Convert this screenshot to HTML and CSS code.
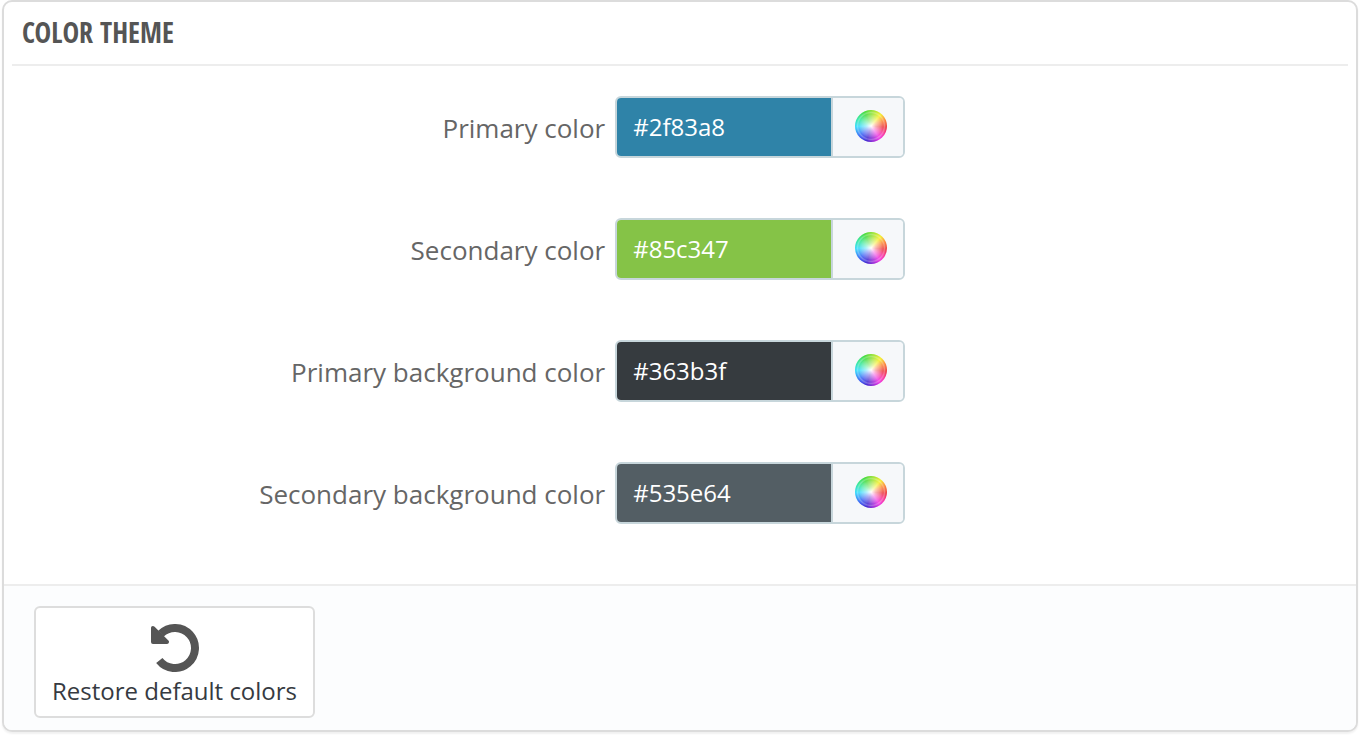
FILE: index.html
```html
<!DOCTYPE html>
<html lang="en">
<head>
<meta charset="utf-8">
<meta name="viewport" content="width=device-width, initial-scale=1">
<title>Color theme</title>
<link rel="stylesheet" href="styles.css">
</head>
<body>
<form class="panel">
  <h1 class="panel-heading">COLOR THEME</h1>
  <div class="fields">
    <div class="field">
      <label class="field-label" for="primary">Primary color</label>
      <div class="picker">
        <input class="picker-value primary" id="primary" type="text" value="#2f83a8">
        <button class="picker-button" type="button" aria-label="Pick primary color"><span class="wheel"></span></button>
      </div>
    </div>
    <div class="field">
      <label class="field-label" for="secondary">Secondary color</label>
      <div class="picker">
        <input class="picker-value secondary" id="secondary" type="text" value="#85c347">
        <button class="picker-button" type="button" aria-label="Pick secondary color"><span class="wheel"></span></button>
      </div>
    </div>
    <div class="field">
      <label class="field-label" for="primary-bg">Primary background color</label>
      <div class="picker">
        <input class="picker-value primary-bg" id="primary-bg" type="text" value="#363b3f">
        <button class="picker-button" type="button" aria-label="Pick primary background color"><span class="wheel"></span></button>
      </div>
    </div>
    <div class="field">
      <label class="field-label" for="secondary-bg">Secondary background color</label>
      <div class="picker">
        <input class="picker-value secondary-bg" id="secondary-bg" type="text" value="#535e64">
        <button class="picker-button" type="button" aria-label="Pick secondary background color"><span class="wheel"></span></button>
      </div>
    </div>
  </div>
  <div class="panel-footer">
    <button class="restore" type="button">
      <svg class="restore-icon" viewBox="0 0 48 48" aria-hidden="true">
        <path d="M8.3 36.4A20 20 0 1 0 10 9.7" fill="none" stroke="#555" stroke-width="8"/>
        <path d="M0 3.8Q0 2 1.8 2Q2.8 2 3.6 2.8L17.4 16.6Q18.2 17.4 18 18.2Q17.700 20 16 20H2Q0 20 0 18Z" fill="#555"/>
      </svg>
      <span>Restore default colors</span>
    </button>
  </div>
</form>
</body>
</html>
```
FILE: styles.css
```css
* {
  box-sizing: border-box;
}

body {
  margin: 0;
  background: #fff;
  font-family: "Open Sans", "Noto Sans", sans-serif;
  color: #555;
}

.panel {
  margin: 0 2px 4px;
  border: 2px solid #dcdcdc;
  border-radius: 10px;
  background: #fff;
  box-shadow: 0 2px 2px rgba(0, 0, 0, 0.06);
  overflow: hidden;
}

.panel-heading {
  margin: 0 8px;
  padding: 0 10px 2px;
  border-bottom: 2px solid #ededed;
  font-family: "Ubuntu Condensed", "Open Sans Condensed", "Roboto Condensed", "Liberation Sans Narrow", sans-serif;
  font-size: 28px;
  font-weight: 400;
  line-height: 60px;
}

.fields {
  display: grid;
  gap: 60px;
  padding: 30px 8px 60px;
}

.field {
  display: grid;
  grid-template-columns: 44.4% 1fr;
  column-gap: 10px;
  align-items: center;
}

.field-label {
  color: #666;
  font-size: 26px;
  line-height: 36px;
  padding-top: 2px;
  text-align: right;
}

.picker {
  display: flex;
  width: 290px;
  height: 62px;
  border: 2px solid #c7d6db;
  border-radius: 6px;
  overflow: hidden;
}

.picker-value {
  flex: 1;
  min-width: 0;
  margin: 0;
  padding: 0 16px 2px;
  border: 0;
  color: #fff;
  font-family: inherit;
  font-size: 24px;
}

.primary {
  background: #2f83a8;
}

.secondary {
  background: #85c347;
}

.primary-bg {
  background: #363b3f;
}

.secondary-bg {
  background: #535e64;
}

.picker-button {
  display: flex;
  justify-content: center;
  width: 72px;
  flex: none;
  padding: 12px 0 0 6px;
  border: 0;
  border-left: 2px solid #c7d6db;
  background: #f6f8fa;
  align-items: flex-start;
}

.wheel {
  width: 32px;
  height: 32px;
  border-radius: 50%;
  background:
    radial-gradient(circle closest-side, #fff 0, rgba(255, 255, 255, 0.6) 30%, rgba(255, 255, 255, 0.25) 65%, rgba(255, 255, 255, 0.1) 76%, rgba(255, 255, 255, 0.3) 84%, transparent 94%),
    conic-gradient(#84e038, #f4f030 40deg, #fc9040 65deg, #ec3c44 95deg, #f83c9c 120deg, #f03ce4 145deg, #9c2cd8 170deg, #4a2cd0 195deg, #4060f4 225deg, #38dcfc 268deg, #38e8a0 300deg, #48dc40 335deg, #84e038);
}

.panel-footer {
  padding: 20px 30px 12px;
  border-top: 2px solid #ededed;
  background: #fcfdfe;
}

.restore {
  display: inline-flex;
  flex-direction: column;
  align-items: center;
  padding: 16px 16px 6px;
  border: 2px solid #ddd;
  border-radius: 6px;
  background: #fff;
  color: #363a41;
  font-family: inherit;
  font-size: 24px;
  line-height: 38px;
  vertical-align: top;
}

.restore-icon {
  width: 48px;
  height: 48px;
}
```
